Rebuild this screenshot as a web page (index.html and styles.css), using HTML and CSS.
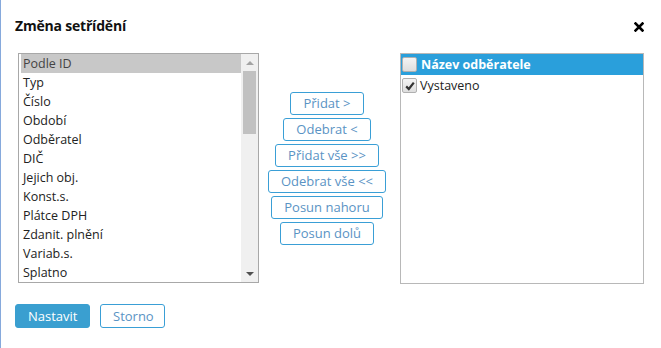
FILE: index.html
```html
<!DOCTYPE html>
<html lang="cs">
<head>
  <meta charset="UTF-8" />
  <title>Změna setřídění</title>
  <link rel="stylesheet" href="styles.css">
</head>
<body>
  <div class="dialog">
    <div class="dialog-header">
      <h1 class="dialog-title">Změna setřídění</h1>
      <svg class="close-icon" width="10" height="10" viewBox="0 0 10 10">
        <path d="M1.5 1.5 L8.5 8.5 M8.5 1.5 L1.5 8.5" stroke="#000" stroke-width="2.6" stroke-linecap="square"/>
      </svg>
    </div>

    <div class="dialog-body">
      <div class="listbox">
        <div class="options">
          <div class="option selected">Podle ID</div>
          <div class="option">Typ</div>
          <div class="option">Číslo</div>
          <div class="option">Období</div>
          <div class="option">Odběratel</div>
          <div class="option">DIČ</div>
          <div class="option">Jejich obj.</div>
          <div class="option">Konst.s.</div>
          <div class="option">Plátce DPH</div>
          <div class="option">Zdanit. plnění</div>
          <div class="option">Variab.s.</div>
          <div class="option">Splatno</div>
        </div>
        <div class="scrollbar">
          <div class="arrow arrow-up"></div>
          <div class="track"><div class="thumb"></div></div>
          <div class="arrow arrow-down"></div>
        </div>
      </div>

      <div class="actions">
        <button class="btn">Přidat &gt;</button>
        <button class="btn">Odebrat &lt;</button>
        <button class="btn">Přidat vše &gt;&gt;</button>
        <button class="btn">Odebrat vše &lt;&lt;</button>
        <button class="btn">Posun nahoru</button>
        <button class="btn">Posun dolů</button>
      </div>

      <div class="sortbox">
        <div class="sort-row active">
          <span class="check"></span>
          <span>Název odběratele</span>
        </div>
        <div class="sort-row">
          <span class="check checked">
            <svg width="12" height="12" viewBox="0 0 12 12">
              <path d="M2.2 6.4 L4.8 9 L9.8 2.6" fill="none" stroke="#333" stroke-width="2.2"/>
            </svg>
          </span>
          <span>Vystaveno</span>
        </div>
      </div>
    </div>

    <div class="dialog-footer">
      <button class="btn btn-primary">Nastavit</button>
      <button class="btn btn-plain">Storno</button>
    </div>
  </div>
</body>
</html>
```

FILE: styles.css
```css
* {
  box-sizing: border-box;
}
body, html {
  margin: 0;
  padding: 0;
  height: 100%;
  overflow: hidden;
  background: #fff;
  font-family: "Open Sans", "Noto Sans", sans-serif;
  color: #222;
}
.dialog {
  height: 348px;
  border-left: 1px solid #86a9dc;
}
.dialog-header {
  display: flex;
  justify-content: space-between;
  align-items: center;
  padding: 13px 17px 0 14px;
  height: 38px;
}
.dialog-title {
  margin: 0;
  font-size: 14px;
  font-weight: bold;
  color: #111;
  letter-spacing: -0.2px;
}
.close-icon {
  margin-top: 2px;
}
.dialog-body {
  display: flex;
  margin-top: 15px;
  padding-left: 17px;
}
.listbox {
  display: flex;
  width: 241px;
  height: 230px;
  border: 1px solid #a8a8a8;
}
.options {
  flex: 1;
  padding: 0 0 0 2px;
}
.option {
  height: 19px;
  line-height: 19px;
  font-size: 12.5px;
  padding-left: 2px;
  color: #222;
  white-space: nowrap;
}
.option.selected {
  background: #c8c8c8;
  color: #444;
}
.scrollbar {
  width: 17px;
  background: #f0f0f0;
  display: flex;
  flex-direction: column;
}
.arrow {
  height: 17px;
  display: flex;
  justify-content: center;
  align-items: center;
}
.arrow-up::before {
  content: "";
  border-left: 4px solid transparent;
  border-right: 4px solid transparent;
  border-bottom: 4px solid #a3a3a3;
}
.arrow-down::before {
  content: "";
  border-left: 4px solid transparent;
  border-right: 4px solid transparent;
  border-top: 4px solid #505050;
}
.track {
  flex: 1;
  padding: 0 2px;
}
.thumb {
  height: 63px;
  background: #c1c1c1;
}
.actions {
  width: 141px;
  display: flex;
  flex-direction: column;
  align-items: center;
  gap: 3px;
  padding: 39px 5px 0 0;
}
.btn {
  height: 23px;
  padding: 0 12px;
  border: 1px solid #3a9fd6;
  border-radius: 3px;
  background: #fff;
  color: #5a93c4;
  font-family: "Open Sans", "Noto Sans", sans-serif;
  font-size: 13px;
  line-height: 21px;
  cursor: pointer;
}
.sortbox {
  width: 244px;
  height: 231px;
  border: 1px solid #b8b8b8;
}
.sort-row {
  display: flex;
  align-items: center;
  gap: 3px;
  height: 21px;
  padding-left: 1px;
  font-size: 12.5px;
  color: #222;
}
.sort-row.active {
  background: #2a9fdb;
  color: #fff;
  font-weight: bold;
  gap: 4px;
}
.check {
  width: 15px;
  height: 15px;
  border: 1px solid #b0b0b0;
  border-radius: 2px;
  background: linear-gradient(#f4f4f4, #dedede);
  display: flex;
  justify-content: center;
  align-items: center;
}
.dialog-footer {
  display: flex;
  gap: 10px;
  padding: 20px 0 0 14px;
}
.btn-primary {
  height: 24px;
  width: 75px;
  background: #3a9fd0;
  border-color: #3a9fd0;
  color: #fff;
  font-size: 13px;
}
.btn-plain {
  height: 24px;
  width: 65px;
  font-size: 13px;
}
```
